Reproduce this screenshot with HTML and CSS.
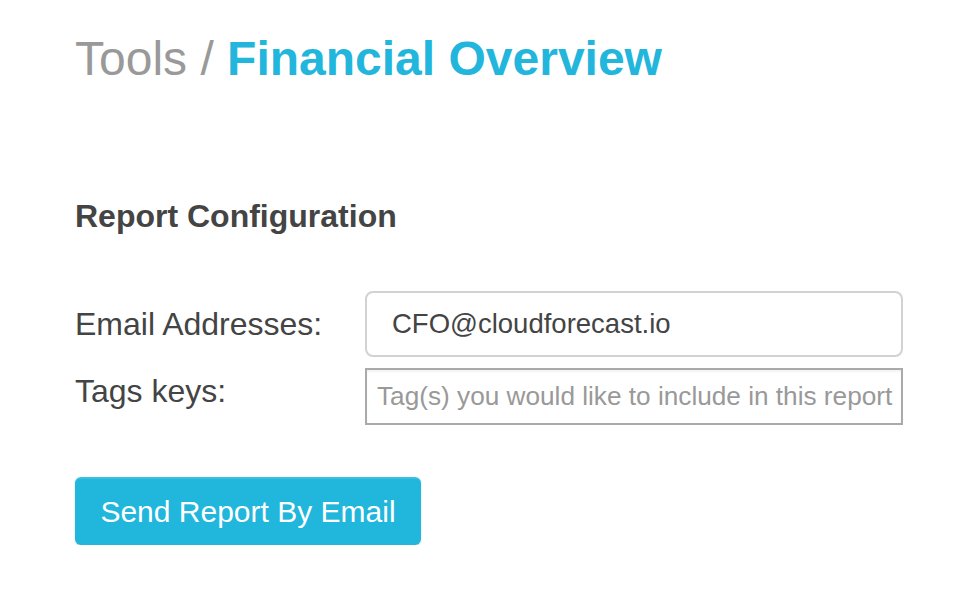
FILE: index.html
```html
<!DOCTYPE html>
<html>
<head>
  <meta charset="UTF-8">
  <title>Tools - Financial Overview</title>
  <link rel="stylesheet" href="styles.css">
</head>
<body>
  <div class="container">
    <h1 class="page-title">
      <span class="crumb">Tools /</span>
      <span class="current">Financial Overview</span>
    </h1>

    <h2 class="section-title">Report Configuration</h2>

    <form class="report-form">
      <div class="field field-email">
        <label for="emails">Email Addresses:</label>
        <input type="text" id="emails" class="input input-rounded" value="CFO@cloudforecast.io">
      </div>
      <div class="field field-tags">
        <label for="tags">Tags keys:</label>
        <input type="text" id="tags" class="input input-square" placeholder="Tag(s) you would like to include in this report">
      </div>
      <button type="button" class="btn">Send Report By Email</button>
    </form>
  </div>
</body>
</html>
```

FILE: styles.css
```css
body {
  font-family: 'Liberation Sans', Arial, sans-serif;
  margin: 0;
  padding: 35px 0 0 75px;
  background-color: #fff;
  color: #444;
}
.container {
  width: 830px;
}
.page-title {
  font-size: 48px;
  line-height: 48px;
  margin: 0;
  font-weight: normal;
}
.page-title .crumb {
  color: #999;
}
.page-title .current {
  color: #22b6dd;
  font-weight: bold;
}
.section-title {
  font-size: 32px;
  line-height: 32px;
  margin: 117px 0 0;
  font-weight: bold;
  color: #444;
}
.report-form {
  margin-top: 59px;
}
.field {
  display: flex;
}
.field label {
  width: 290px;
  flex-shrink: 0;
  font-size: 32px;
  color: #444;
}
.field-email {
  align-items: center;
}
.field-tags {
  align-items: flex-start;
  margin-top: 11px;
}
.field-tags label {
  line-height: 46px;
}
.input {
  width: 538px;
  box-sizing: border-box;
  font-family: 'Liberation Sans', Arial, sans-serif;
  color: #444;
  outline: none;
  background-color: #fff;
}
.input-rounded {
  height: 66px;
  padding: 0 20px 0 25px;
  font-size: 27.5px;
  border: 2px solid #d2d2d2;
  border-radius: 8px;
}
.input-square {
  height: 57px;
  padding: 0 8px 0 10px;
  font-size: 26.2px;
  border: 2px solid #aaa;
  border-radius: 0;
  box-shadow: inset 0 2px 2px rgba(0, 0, 0, 0.05);
}
.input-square::placeholder {
  color: #999;
}
.btn {
  display: block;
  margin-top: 52px;
  width: 346px;
  height: 68px;
  padding: 0;
  font-family: 'Liberation Sans', Arial, sans-serif;
  font-size: 30px;
  white-space: nowrap;
  text-align: center;
  color: #fff;
  background-color: #21b6dc;
  border: none;
  border-top: 2px solid #38bfe2;
  border-radius: 6px;
  box-shadow: 0 1px 2px rgba(0, 0, 0, 0.15);
  cursor: pointer;
}
```
